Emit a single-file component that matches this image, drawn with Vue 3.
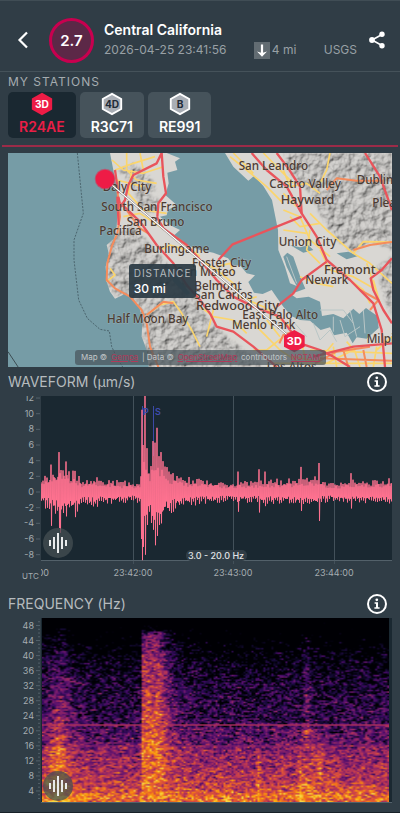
<template>
  <main class="event">
    <header class="header">
      <button class="icon-btn back" aria-label="Back">
        <svg width="12" height="18" viewBox="0 0 12 18"><path d="M10 1.5 L2.5 9 L10 16.5" /></svg>
      </button>
      <div class="magnitude">2.7</div>
      <div class="info">
        <h1>Central California</h1>
        <div class="meta">
          <time>2026-04-25 23:41:56</time>
          <span class="depth">
            <svg width="16" height="17" viewBox="0 0 16 17">
              <rect width="16" height="17" fill="#626c72" />
              <path d="M8 2.5 V12" stroke="#fff" stroke-width="2.2" />
              <path d="M3 9.5 L8 14.8 L13 9.5 L8 11 Z" fill="#fff" />
            </svg>
            4 mi
          </span>
          <span>USGS</span>
        </div>
      </div>
      <button class="icon-btn share" aria-label="Share">
        <svg width="18" height="18" viewBox="0 0 18 18">
          <path d="M14 3.5 L4 9 L14 14.5" fill="none" stroke="#fff" stroke-width="1.6" />
          <circle cx="14" cy="3.3" r="2.7" fill="#fff" />
          <circle cx="4" cy="9" r="2.9" fill="#fff" />
          <circle cx="14" cy="14.7" r="2.7" fill="#fff" />
        </svg>
      </button>
    </header>

    <section class="stations">
      <h2>MY STATIONS</h2>
      <div class="station-list">
        <button
          v-for="s in stations"
          :key="s.id"
          class="station"
          :class="{ active: s.id === selected }"
          @click="selected = s.id"
        >
          <svg width="24" height="26" viewBox="0 0 24 26">
            <path class="hex" d="M12 2 L22 7.5 V18.5 L12 24 L2 18.5 V7.5 Z" />
            <text x="12" y="17" text-anchor="middle">{{ s.type }}</text>
          </svg>
          <span>{{ s.id }}</span>
        </button>
      </div>
    </section>

    <section class="map">
      <!-- map units are a third of a pixel at phone width -->
      <svg class="map-canvas" viewBox="24 9 1152 642">
        <defs>
          <filter id="relief" x="0" y="0" width="100%" height="100%">
            <feTurbulence type="fractalNoise" baseFrequency="0.04" numOctaves="4" seed="8" result="noise" />
            <feColorMatrix in="noise" values="0 0 0 0 0  0 0 0 0 0  0 0 0 0 0  1.2 0 0 0 0" result="height" />
            <feDiffuseLighting in="height" surfaceScale="8" diffuseConstant="1" lighting-color="#d6d4d1" result="light">
              <feDistantLight azimuth="225" elevation="50" />
            </feDiffuseLighting>
            <feGaussianBlur in="SourceAlpha" stdDeviation="4" result="soft" />
            <feComposite in="light" in2="soft" operator="in" />
          </filter>
        </defs>
        <rect x="24" y="9" width="1152" height="642" fill="#d9d7d3" />
        <g filter="url(#relief)">
          <path d="M355 60 L400 40 L450 80 L470 120 L430 130 L390 100 Z" />
          <path d="M400 110 L480 150 L470 190 L420 180 Z" />
          <path d="M320 285 L352 245 L400 230 L440 270 L500 340 L560 400 L620 500 L680 560 L760 620 L790 651 L440 651 L420 470 L345 440 L318 395 Z" />
          <path d="M850 9 H1176 V300 L1110 275 L1060 310 L1000 260 L960 190 L930 130 L870 70 Z" />
          <path d="M1130 350 L1176 320 V500 L1150 440 Z" />
        </g>
        <g class="water">
          <path d="M24 9 H330 L340 60 350 110 354 170 350 230 343 265 320 285 326 310 317 350 320 395 330 425 345 446 375 432 398 446 418 470 427 510 425 560 440 600 446 651 H24 Z" />
          <path d="M500 9 L540 25 525 35 532 60 502 68 506 100 496 135 530 165 504 180 500 196 480 200 510 225 540 240 520 258 560 285 600 300 640 308 684 325 700 345 722 348 740 370 765 376 745 396 762 428 788 432 815 420 832 445 850 470 874 498 900 510 930 512 962 540 990 532 1002 556 1040 548 1058 580 1070 562 1100 566 1136 534 1132 498 1098 474 1078 492 1060 476 1030 505 1000 492 966 498 960 455 926 440 890 445 872 432 916 416 900 378 880 320 862 308 850 320 860 350 880 390 890 408 870 400 855 350 835 300 834 240 826 200 816 150 790 108 762 78 745 92 700 50 675 9 Z" />
          <path d="M870 285 L900 292 925 286 940 300 910 308 Z M1010 310 L1045 305 1075 318 1040 328 Z" />
          <path d="M505 352 L530 380 570 430 560 436 520 395 Z" />
        </g>
        <g class="marsh">
          <path d="M880 515 L920 560 M940 520 L960 570 990 540 1010 575 M1020 510 L1035 560 1080 530 M1050 480 L1070 560 M960 480 H1030 L1060 520 M860 320 L890 400 M1000 500 L1000 545 M1090 480 L1095 550" />
        </g>
        <path class="border" d="M232 9 L240 90 250 190 222 270 222 330 236 450 262 505 300 538 328 543 335 590 352 625 368 651" />
        <path d="M24 605 L55 652" stroke="#3d4d53" stroke-width="3" fill="none" />
        <g class="road minor">
          <path d="M336 30 L370 60 430 70 490 50 M345 60 L400 40 465 20 M380 9 V60 L410 90 470 100 M350 90 L430 110 M420 9 L430 60 M395 60 L385 130 430 180 500 190" />
          <path d="M370 200 L420 190 480 230 540 270 600 320 M480 300 L510 285 560 300 M600 330 L650 360 700 400 720 440 790 470 870 530 M650 350 L690 340 700 370 M740 450 L770 440" />
          <path d="M320 395 L345 375 330 355 M440 495 L480 465 520 455 545 490 575 540 600 590 M600 470 L640 500 700 510 740 550 M640 480 L620 560" />
          <path d="M690 20 L740 60 800 110 850 160 M700 9 L760 70 M790 9 L830 50 880 100 M850 60 L870 110 920 100 960 130 M990 9 L980 60 960 100 M870 200 L900 230 960 220 M850 180 L900 200 930 270 990 320 M850 130 L890 170" />
          <path d="M930 190 L980 240 1060 310 1110 340 1176 400 M850 240 L920 250 M930 240 L920 300 960 340 M960 300 L990 360 1060 380 1130 420 M1060 310 L1090 275 1176 276 M900 380 L950 400 1000 410 M1050 390 L1090 420 1110 460 M1120 390 L1140 460 M1100 340 L1130 430" />
          <path d="M760 520 L800 560 840 600 900 640 M800 510 L840 560 M850 560 L800 600 760 600 M900 560 L920 640 M880 620 L980 640 1060 600 M930 600 L1176 610 M1000 590 L1010 651 M1060 590 L1080 651 M1130 590 L1120 651 M950 640 L1000 580 M1176 560 L1130 600 M820 640 H1176 M1040 575 L1070 610" />
        </g>
        <g class="road orange">
          <path d="M352 120 L360 200 352 250 335 290 322 340 320 390 345 415 390 440 425 480 440 520 450 590 475 651" />
          <path d="M365 160 L420 235 445 250 M440 495 L490 455 520 460 M1176 276 L1110 285 1060 300 M980 120 L1010 85 1070 92 1150 92" />
          <path d="M838 580 L850 555 880 545 M1080 420 L1135 450 1110 480 M945 640 L1010 605 1110 590 M960 625 L1176 632 M1030 600 L1045 651 M1090 600 L1100 651" />
        </g>
        <g class="road major">
          <path d="M485 9 L470 40 400 75 385 105 375 150 362 170 355 140 M485 9 L490 80 498 130 475 160 472 200 M345 60 L355 130 M352 140 L356 225" />
          <path d="M362 160 L420 215 470 285 520 340 560 405 600 450 630 490 650 530 700 545 760 590 830 651" />
          <path d="M470 200 L490 235 560 285 600 330 650 390 700 440 760 470 840 500 900 580 960 600 1000 620 1050 651" />
          <path d="M655 330 L698 283 905 200 M755 9 L800 60 860 110 905 190 950 260 980 330 1050 390 1120 460 1145 540 1155 651" />
          <path d="M830 9 L865 55 900 110 905 190 M1095 9 L1140 80 1176 180 M830 470 L880 430 905 390 980 335" />
          <path d="M1176 325 L1145 360 1112 385 1120 420 1150 480 1176 520 M940 620 L1060 590 1176 580" />
        </g>
        <g class="labels">
          <text
            v-for="p in places"
            :key="p.name"
            :x="p.x"
            :y="p.y"
            :class="{ city: p.city }"
          >{{ p.name }}</text>
        </g>
        <path d="M315 87 L883 573" stroke="#4a3f3a" stroke-width="5" />
        <path d="M315 87 L883 573" stroke="#fff" stroke-width="4" />
        <circle cx="315" cy="87" r="31" fill="#ee1c46" fill-opacity="0.5" />
        <circle cx="315" cy="87" r="28" fill="#ee1c46" />
        <path d="M883 540 L914 557 V590 L883 607 L852 590 V557 Z" fill="#ee1c46" />
        <text class="pin" x="883" y="585" text-anchor="middle">3D</text>
      </svg>
      <div class="distance">
        <span>DISTANCE</span>
        <strong>30 mi</strong>
      </div>
      <div class="credits">
        <span>Map ©</span> <a href="#">Gempa</a> <span>| Data ©</span> <a href="#">OpenStreetMap</a>
        <span>contributors</span> <a href="#">NOTAM</a>
      </div>
    </section>

    <section>
      <div class="title-row">
        <h2>WAVEFORM (μm/s)</h2>
        <button class="icon-btn" aria-label="About the waveform">
          <svg width="20" height="20" viewBox="0 0 20 20">
            <circle cx="10" cy="10" r="9" fill="none" stroke="#fff" stroke-width="2" />
            <circle cx="9.8" cy="5.8" r="1.4" fill="#fff" />
            <path d="M7.6 8.2 H11 V13.2 H12.6 V14.8 H7.4 V13.2 H9 V9.7 H7.6 Z" fill="#fff" />
          </svg>
        </button>
      </div>
      <div class="chart">
        <svg class="wave" viewBox="0 0 384 193">
          <g v-for="v in amplitudes" :key="v">
            <text class="tick" x="26" :y="yAt(v) + 3" text-anchor="end">{{ v }}</text>
            <path class="axis" :d="`M28 ${yAt(v)} H32`" />
          </g>
          <svg x="33" y="0" width="351" height="193" viewBox="0 0 351 193">
            <rect width="351" height="164" fill="#1a2831" />
            <path class="grid" d="M92.5 0 V168 M192.5 0 V168 M293.5 0 V168" />
            <path class="axis" d="M0 164.5 H351" />
            <path d="M101.5 10 V60 M112.5 10 V60" stroke="#3c4aa5" />
            <path :d="wavePath" fill="none" stroke="#ff7290" stroke-width="1" stroke-linejoin="bevel" />
            <text class="phase" x="102" y="19">P</text>
            <text class="phase" x="114" y="19">S</text>
            <text class="tick" x="8" y="180" text-anchor="end">23:41:00</text>
            <text
              v-for="t in times"
              :key="t.label"
              class="tick"
              :x="t.x"
              y="180"
              text-anchor="middle"
            >{{ t.label }}</text>
            <rect x="145" y="154" width="61" height="11" rx="5" fill="#303d46" />
            <text class="band" x="175" y="163" text-anchor="middle">3.0 - 20.0 Hz</text>
          </svg>
          <text class="tick utc" x="14" y="183">UTC</text>
        </svg>
        <button class="sound" aria-label="Play waveform">
          <svg width="20" height="22" viewBox="0 0 20 22"><path :d="soundBars" /></svg>
        </button>
      </div>
    </section>

    <section>
      <div class="title-row">
        <h2>FREQUENCY (Hz)</h2>
        <button class="icon-btn" aria-label="About the frequency">
          <svg width="20" height="20" viewBox="0 0 20 20">
            <circle cx="10" cy="10" r="9" fill="none" stroke="#fff" stroke-width="2" />
            <circle cx="9.8" cy="5.8" r="1.4" fill="#fff" />
            <path d="M7.6 8.2 H11 V13.2 H12.6 V14.8 H7.4 V13.2 H9 V9.7 H7.6 Z" fill="#fff" />
          </svg>
        </button>
      </div>
      <div class="chart spectrum">
        <svg class="freq-axis" width="33" height="185" viewBox="0 0 33 185">
          <text
            v-for="f in frequencies"
            :key="f"
            class="tick"
            x="26"
            :y="fAt(f) + 3"
            text-anchor="end"
          >{{ f }}</text>
          <path class="axis" :d="freqTicks" />
        </svg>
        <div class="spectrum-plot">
          <canvas ref="canvas" width="174" height="123"></canvas>
        </div>
        <button class="sound" aria-label="Play spectrum">
          <svg width="20" height="22" viewBox="0 0 20 22"><path :d="soundBars" /></svg>
        </button>
      </div>
    </section>
  </main>
</template>

<script setup>
import { onMounted, ref } from 'vue'

const stations = [
  { id: 'R24AE', type: '3D' },
  { id: 'R3C71', type: '4D' },
  { id: 'RE991', type: 'B' },
]
const selected = ref('R24AE')

const places = [
  { name: 'Daly City', x: 308, y: 122 },
  { name: 'South San Francisco', x: 304, y: 184 },
  { name: 'San Bruno', x: 380, y: 227 },
  { name: 'Pacifica', x: 298, y: 255 },
  { name: 'Burlingame', x: 433, y: 308 },
  { name: 'Foster City', x: 576, y: 350 },
  { name: 'San Mateo', x: 530, y: 379 },
  { name: 'Belmont', x: 583, y: 420 },
  { name: 'San Carlos', x: 583, y: 446 },
  { name: 'Redwood City', x: 588, y: 479, city: true },
  { name: 'East Palo Alto', x: 727, y: 508 },
  { name: 'Menlo Park', x: 696, y: 538 },
  { name: 'Half Moon Bay', x: 321, y: 519 },
  { name: 'San Leandro', x: 716, y: 61 },
  { name: 'Castro Valley', x: 808, y: 115 },
  { name: 'Hayward', x: 842, y: 161, city: true },
  { name: 'Dublin', x: 1070, y: 102 },
  { name: 'Pleasanton', x: 1117, y: 170 },
  { name: 'Union City', x: 836, y: 288 },
  { name: 'Fremont', x: 972, y: 371, city: true },
  { name: 'Newark', x: 916, y: 403 },
  { name: 'Milpitas', x: 1100, y: 580 },
  { name: 'Los Altos', x: 800, y: 662 },
]

const amplitudes = [12, 10, 8, 6, 4, 2, 0, -2, -4, -6, -8]
const times = [
  { label: '23:42:00', x: 92 },
  { label: '23:43:00', x: 192 },
  { label: '23:44:00', x: 293 },
]
const frequencies = [48, 44, 40, 36, 32, 28, 24, 20, 16, 12, 8, 4]
const soundBars = 'M2 8 V14 M6 5 V17 M10 1 V21 M14 5 V17 M18 8 V14'

const yAt = (v) => 96 - v * 7.83
const fAt = (f) => 188 - f * 3.76

let freqTicks = ''
for (let f = 2; f <= 49; f++) {
  freqTicks += `M${f % 4 === 0 ? 28 : 30} ${fAt(f)} H32`
}

function random(seed) {
  let s = seed
  return () => {
    s = (s * 1664525 + 1013904223) >>> 0
    return s / 4294967296
  }
}

function interpolate(stops, x) {
  for (let i = 1; i < stops.length; i++) {
    if (x <= stops[i][0]) {
      const [x0, v0] = stops[i - 1]
      const [x1, v1] = stops[i]
      return v0 + ((v1 - v0) * (x - x0)) / (x1 - x0)
    }
  }
  return stops[stops.length - 1][1]
}

// [x, amplitude] of the signal's outline
const envelope = [
  [0, 2], [8, 2.2], [14, 3], [20, 3.2], [28, 2.8], [36, 2.5], [42, 1.5], [54, 2.1], [62, 1.5],
  [74, 1.5], [90, 1.3], [99, 1.4], [101, 6], [103, 6], [106, 4.6], [109, 3.8], [113, 6.4], [118, 5],
  [122, 4], [128, 3], [136, 2.1], [150, 1.8], [175, 1.4], [190, 1.2], [230, 1.6], [260, 1.7],
  [272, 2], [290, 1.1], [310, 1.5], [345, 1.5], [351, 1.9],
]
// x: [top, bottom] of single peaks
const spikes = {
  10: [3.5, -4.3], 18: [5.1, -4.6], 19: [2.4, -5.2], 25: [3.9, -3.1], 34: [2.7, -3.2],
  100: [2, -6], 101: [10.5, -8.7], 102: [6, -7], 104: [12.4, -8], 106: [5.6, -4.2],
  112: [6.5, -4.8], 114: [6.3, -6.8], 116: [8.2, -5.6], 120: [5.1, -4], 197: [2.6, -2.5],
  218: [2.9, -2.6], 224: [2.6, -1.8], 260: [3.2, -2.4], 278: [3.7, -3.7], 310: [2.4, -2.1],
}

const waveRandom = random(42)
let wavePath = ''
for (let x = 0; x <= 351; x++) {
  const level = interpolate(envelope, x)
  const dip = x % 2 ? 0.65 : 1
  const [top, bottom] = spikes[x] || [
    level * dip * (0.5 + waveRandom() * 0.55),
    -level * dip * (0.5 + waveRandom() * 0.5),
  ]
  wavePath += `${x ? 'L' : 'M'}${x} ${yAt(top).toFixed(1)} L${x + 0.5} ${yAt(bottom).toFixed(1)}`
}

const palette = [
  [0, 0, 0, 4], [0.13, 22, 11, 57], [0.25, 66, 10, 104], [0.38, 106, 23, 110], [0.5, 147, 38, 103],
  [0.63, 188, 55, 84], [0.75, 221, 81, 58], [0.88, 243, 120, 25], [0.96, 252, 165, 10], [1.1, 246, 215, 70],
]

function color(v) {
  return [1, 2, 3].map((c) => interpolate(palette.map((p) => [p[0], p[c]]), v))
}

// background energy from the top (50 Hz) to the bottom
const floor = [
  [0, -0.4], [18, -0.28], [35, -0.08], [55, 0.04], [75, 0.13], [105, 0.2], [107, 0.28], [126, 0.34],
  [129, 0.45], [150, 0.53], [165, 0.62], [174, 0.74], [178, 0.86], [184, 0.8],
]
const burstLevel = [
  [0, -0.5], [10, -0.15], [15, 0.33], [40, 0.5], [70, 0.6], [100, 0.72], [130, 0.8], [184, 0.86],
]

const bump = (x, center, width) => Math.exp(-(((x - center) / width) ** 2))

function energy(x, y) {
  let e = interpolate(floor, y)
  e += bump(x, 16, 14) * (y > 10 ? 0.2 : 0)
  e += bump(x, 15, 8) * (y > 75 ? 0.12 : 0)
  if (x > 98) {
    const tail = x < 117 ? 1 : Math.exp(-(x - 117) / 12)
    e += Math.max(0, interpolate(burstLevel, y) - e) * tail
  }
  e += bump(x, 265, 4) * (y > 15 && y < 120 ? 0.18 : 0)
  e += bump(x, 268, 13) * (y > 110 ? 0.13 : 0)
  e += bump(x, 216, 2) * (y > 130 ? 0.16 : 0)
  e += bump(x, 258, 2) * (y > 135 ? 0.18 : 0)
  e += bump(x, 278, 2) * (y > 135 && y < 160 ? 0.15 : 0)
  return e
}

const canvas = ref(null)

onMounted(() => {
  const el = canvas.value
  const ctx = el.getContext('2d')
  const { width, height } = el
  const image = ctx.createImageData(width, height)
  const rand = random(7)
  const lut = Array.from({ length: 256 }, (_, i) => color((i / 255) * 1.1))

  for (let row = 0; row < height; row++) {
    let last = 0
    for (let col = 0; col < width; col++) {
      const x = col * 2
      const y = row * 1.5
      const n = (rand() + rand()) - 1
      let v = energy(x, y) + (n * 0.8 + last * 0.3) * 0.42
      last = n
      if (row === 71) v = Math.max(v, 0.58)
      if (row === 85) v = Math.max(v, 0.42)
      if (x > 18 && x < 42 && Math.abs(y - 60 - (x - 18) / 4) < 1) v = Math.max(v, 0.5)
      const index = Math.min(255, Math.max(0, Math.round((v / 1.1) * 255)))
      const [r, g, b] = lut[index]
      image.data.set([r, g, b, 255], (row * width + col) * 4)
    }
  }
  ctx.putImageData(image, 0, 0)
})
</script>

<style>
body {
  margin: 0;
  background: #303d46;
}
</style>

<style scoped>
.event {
  box-sizing: border-box;
  padding-bottom: 9px;
  border-top: 1px solid #404d55;
  border-bottom: 1px solid #182128;
  font-family: Inter, 'Liberation Sans', sans-serif;
  color: #fff;
}

section {
  padding: 0 8px;
}

button {
  padding: 0;
  border: 0;
  background: none;
  font: inherit;
  color: inherit;
  cursor: pointer;
}

svg {
  display: block;
}

h1,
h2 {
  margin: 0;
}

.header {
  display: flex;
  align-items: center;
  height: 62px;
  padding: 8px 14px 0 17px;
  border-bottom: 1px solid #45525a;
}

.back path {
  fill: none;
  stroke: #fff;
  stroke-width: 2.2;
}

.magnitude {
  box-sizing: border-box;
  width: 45px;
  height: 45px;
  margin-left: 20px;
  border: 3px solid #c8004f;
  border-radius: 50%;
  background: #5c2847;
  font-size: 15px;
  font-weight: 600;
  line-height: 39px;
  text-align: center;
}

.info {
  flex: 1;
  margin-left: 10px;
  line-height: 20px;
}

.info h1 {
  font-size: 14px;
  font-weight: 600;
}

.meta {
  display: flex;
  justify-content: space-between;
  margin-right: 11px;
  font-size: 12px;
  color: #98a0a5;
}

.depth {
  display: flex;
  align-items: center;
  gap: 2px;
}

.stations {
  padding-bottom: 7px;
}

.stations h2 {
  font-size: 12px;
  font-weight: 400;
  line-height: 20px;
  letter-spacing: 1px;
  color: #a5acb0;
}

.station-list {
  display: flex;
  gap: 4px;
}

.station {
  display: flex;
  flex-direction: column;
  align-items: center;
  height: 46px;
  padding: 0 11px;
  border-radius: 5px;
  background: #46535b;
  font-size: 14px;
  font-weight: 600;
  line-height: 22px;
}

.station.active {
  background: #1a2831;
  color: #e91e46;
}

.station text {
  font-size: 11px;
  font-weight: 700;
  fill: #1f2b38;
}

.hex {
  fill: #a9aeb5;
  stroke: #fff;
  stroke-width: 2;
}

.active .hex {
  fill: #ee1c46;
  stroke: #ee1c46;
}

.station.active text {
  fill: #fff;
}

.map {
  position: relative;
  margin: 0 2px;
  padding: 6px 6px 0;
  border-top: 2px solid #9c2b48;
}

.map-canvas {
  width: 100%;
}

.water {
  fill: #769ca6;
}

.marsh {
  fill: none;
  stroke: #b9c6c6;
  stroke-width: 3;
}

.border {
  fill: none;
  stroke: #4b656e;
  stroke-width: 3;
  stroke-dasharray: 6 4;
}

.road {
  fill: none;
  stroke-linejoin: round;
}

.minor {
  stroke: #fbd56c;
  stroke-width: 5;
}

.orange {
  stroke: #f58c5c;
  stroke-width: 6;
}

.major {
  stroke: #e9545b;
  stroke-width: 7;
}

.labels text {
  font-family: 'Noto Sans', 'Open Sans', sans-serif;
  font-size: 35px;
  font-weight: 500;
  fill: #4c3c33;
  stroke: #dddbd7;
  stroke-opacity: 0.3;
  stroke-width: 3;
  paint-order: stroke;
}

.labels .city {
  font-size: 38px;
}

.pin {
  font-size: 33px;
  font-weight: 700;
  fill: #fff;
}

.distance {
  position: absolute;
  top: 53%;
  left: 32%;
  display: flex;
  flex-direction: column;
  padding: 2px 5px;
  border-radius: 3px;
  background: rgba(43, 58, 68, 0.93);
  line-height: 15px;
}

.distance span {
  font-size: 10px;
  letter-spacing: 1px;
  color: #b4babe;
}

.distance strong {
  font-size: 12px;
  font-weight: 500;
}

.credits {
  position: absolute;
  right: 72px;
  bottom: 2px;
  left: 73px;
  display: flex;
  justify-content: space-between;
  padding: 0 6px;
  border-radius: 3px;
  background: rgba(72, 84, 92, 0.72);
  font-size: 8px;
  line-height: 15px;
  white-space: nowrap;
  color: #c3c7c9;
}

.credits a {
  color: #b03a5a;
}

.title-row {
  display: flex;
  justify-content: space-between;
  align-items: center;
  height: 29px;
  padding-right: 5px;
}

.title-row h2 {
  font-size: 14px;
  font-weight: 400;
  color: #b6bbbe;
}

.chart {
  position: relative;
}

.wave {
  width: 100%;
}

.tick {
  font-size: 9px;
  fill: #a5acb0;
}

.utc {
  font-size: 8px;
}

.axis {
  stroke: #53616a;
}

.grid {
  stroke: #43515a;
}

.phase {
  font-size: 9px;
  font-weight: 600;
  fill: #3f4cb0;
}

.band {
  font-size: 9px;
  font-weight: 500;
  fill: #e0e3e5;
}

.spectrum {
  display: flex;
}

.freq-axis {
  flex: none;
}

.spectrum-plot {
  flex: 1;
  padding: 0 3px 0 1px;
  border-bottom: 1px solid #53616a;
  background: #1a2831;
}

canvas {
  display: block;
  width: 100%;
  height: 184px;
}

.sound {
  position: absolute;
  bottom: 31px;
  left: 35px;
  display: flex;
  justify-content: center;
  align-items: center;
  width: 30px;
  height: 30px;
  border-radius: 50%;
  background: rgba(69, 79, 83, 0.75);
}

.spectrum .sound {
  bottom: 2px;
}

.sound path {
  stroke: #e8eaeb;
  stroke-width: 2;
}
</style>
